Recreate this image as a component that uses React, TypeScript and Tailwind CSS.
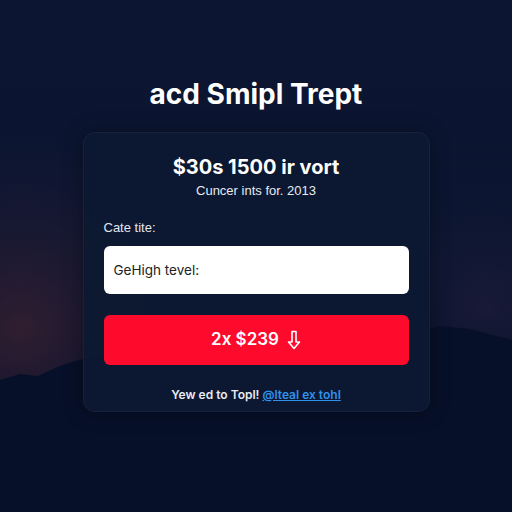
import React from 'react';

function DownArrow() {
  return (
    <svg width="14" height="20" viewBox="0 0 14 20" fill="none" className="ml-[8px]">
      <path
        d="M5 1.5 H9 V12 H12.5 L7 18.5 L1.5 12 H5 Z"
        stroke="white"
        strokeWidth="1.6"
        strokeLinejoin="round"
      />
    </svg>
  );
}

function Backdrop() {
  return (
    <svg
      className="absolute inset-0 h-full w-full"
      viewBox="0 0 512 512"
      preserveAspectRatio="none"
    >
      <defs>
        <radialGradient id="hazeLeft" cx="0.04" cy="0.64" r="0.42">
          <stop offset="0" stopColor="#4a2632" stopOpacity="0.6" />
          <stop offset="0.6" stopColor="#261b36" stopOpacity="0.3" />
          <stop offset="1" stopColor="#0b1530" stopOpacity="0" />
        </radialGradient>
        <radialGradient id="hazeRight" cx="0.95" cy="0.6" r="0.3">
          <stop offset="0" stopColor="#2a2140" stopOpacity="0.45" />
          <stop offset="1" stopColor="#0b1530" stopOpacity="0" />
        </radialGradient>
      </defs>
      <rect width="512" height="512" fill="url(#hazeLeft)" />
      <rect width="512" height="512" fill="url(#hazeRight)" />
      {/* hills on the horizon */}
      <path
        d="M0 380 L20 374 L38 376 L55 368 L72 362 L90 357 L110 353 L140 351 L200 352 L300 350 L400 336 L440 326 L470 329 L512 340 L512 512 L0 512 Z"
        fill="#071029"
      />
    </svg>
  );
}

export default function App() {
  return (
    <div className="relative h-[512px] w-[512px] overflow-hidden bg-gradient-to-b from-[#0c1632] via-[#0b1530] to-[#050d25] font-['Inter',sans-serif]">
      <Backdrop />

      <div className="relative flex flex-col items-center pt-[77px]">
        <h1 className="text-[28px] font-bold leading-[34px] tracking-[0px] text-white">
          acd Smipl Trept
        </h1>

        <div className="mt-[21px] flex w-[347px] flex-col rounded-[12px] border border-[#16223d] bg-[#0d1832]/95 px-[20px] pb-[7px] pt-[21px] shadow-[0_0_20px_rgba(0,0,0,0.35)]">
          <h2 className="text-center text-[20px] font-bold leading-[26px] text-white">
            $30s 1500 ir vort
          </h2>
          <p className="mt-[2px] text-center font-['Liberation_Sans',sans-serif] text-[13px] leading-[18px] text-[#e8ebf2]">
            Cuncer ints for. 2013
          </p>

          <label className="mt-[19px] font-['Liberation_Sans',sans-serif] text-[13px] leading-[18px] text-[#e3e7ef]">
            Cate tite:
          </label>
          <div className="mt-[9px] flex h-[48px] items-center rounded-[6px] bg-white px-[10px] text-[13.5px] text-[#222]">
            GeHigh tevel:
          </div>

          <button className="mt-[21px] flex h-[50px] items-center justify-center rounded-[6px] bg-[#fe0a2c] text-[17px] font-semibold text-white">
            2x $239
            <DownArrow />
          </button>

          <p className="mt-[21px] text-center text-[12px] font-semibold leading-[18px] text-[#e8ebf2]">
            Yew ed to Topl!{' '}
            <a className="text-[#2f92ea] underline" href="#">
              @lteal ex tohl
            </a>
          </p>
        </div>
      </div>
    </div>
  );
}
